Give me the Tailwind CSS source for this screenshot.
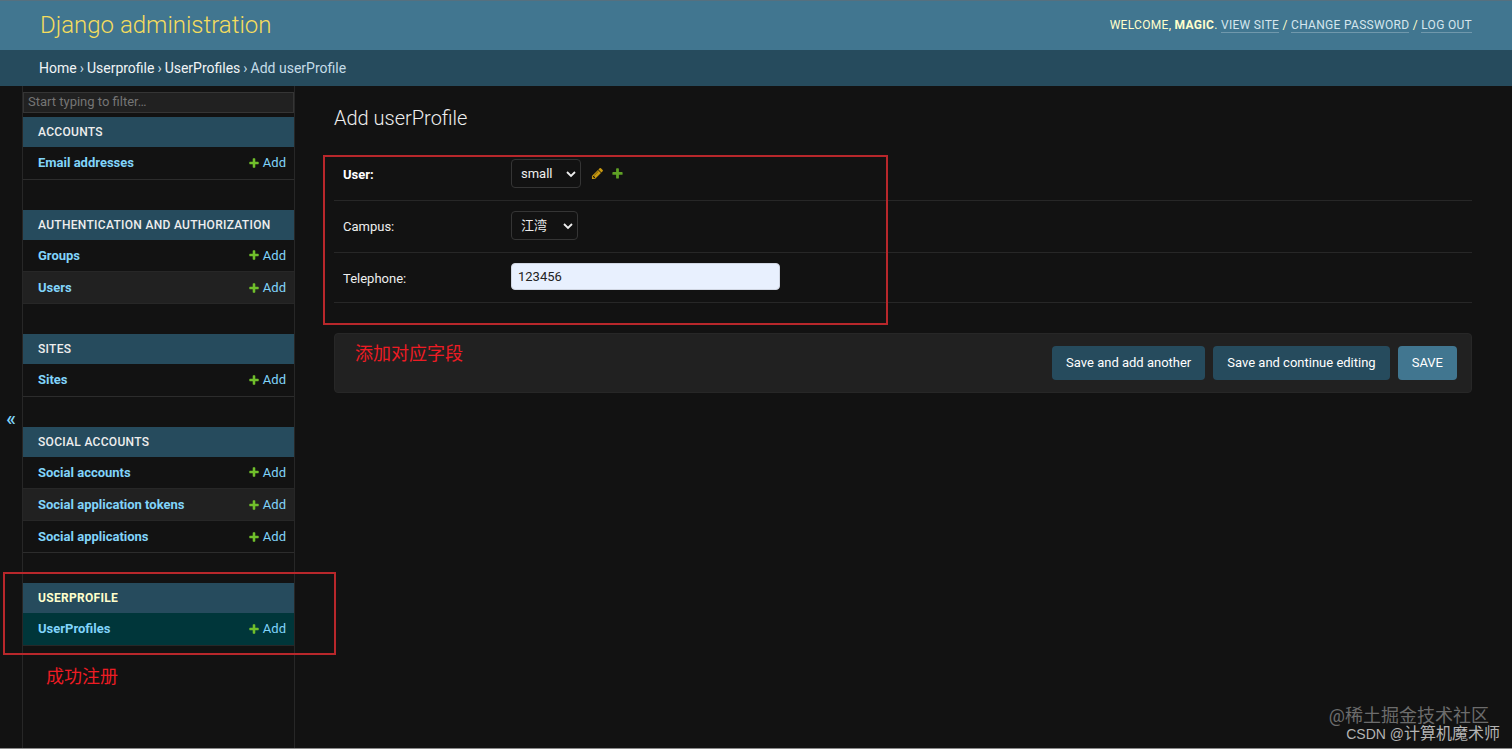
<!DOCTYPE html>
<html lang="en">
<head>
    <meta charset="UTF-8">
    <meta name="viewport" content="width=device-width, initial-scale=1.0">
    <title>Add userProfile | Django site admin</title>
    <script src="https://cdn.jsdelivr.net/npm/@tailwindcss/browser@4"></script>
</head>
<body class="relative min-h-screen flex flex-col bg-[#121212] border-b border-[#8a8a8a] font-['Roboto','Noto_Sans_CJK_SC',sans-serif] text-[13px] text-[#eeeeee]">
    <!-- Shared icons -->
    <svg class="hidden">
        <symbol id="icon-add" viewBox="0 0 1792 1792">
            <path d="M1600 796v192q0 40-28 68t-68 28h-416v416q0 40-28 68t-68 28h-192q-40 0-68-28t-28-68v-416h-416q-40 0-68-28t-28-68v-192q0-40 28-68t68-28h416v-416q0-40 28-68t68-28h192q40 0 68 28t28 68v416h416q40 0 68 28t28 68z"/>
        </symbol>
        <symbol id="icon-change" viewBox="0 0 1792 1792">
            <path d="M491 1536l91-91-235-235-91 91v107h128v128h107zm523-928q0-22-22-22-10 0-17 7l-542 542q-7 7-7 17 0 22 22 22 10 0 17-7l542-542q7-7 7-17zm-54-192l416 416-832 832h-416v-416zm683 96q0 53-37 90l-166 166-416-416 166-165q36-38 90-38 53 0 91 38l235 234q37 39 37 91z"/>
        </symbol>
        <symbol id="icon-chevron" viewBox="0 0 10 10">
            <path d="M1 3l4 4 4-4" fill="none" stroke="#eeeeee" stroke-width="1.8"/>
        </symbol>
    </svg>

    <header class="h-[50px] px-10 pb-0.5 flex items-center justify-between bg-[#417690] border-t border-[#56707f] text-[#ffffcc]">
        <a href="#" class="text-2xl font-light text-[#f5dd5d]">Django administration</a>
        <div class="text-xs tracking-wide uppercase">
            Welcome, <strong>magic</strong>.
            <a href="#" class="text-[#d5e6ee] border-b border-white/25">View site</a> /
            <a href="#" class="text-[#d5e6ee] border-b border-white/25">Change password</a> /
            <a href="#" class="text-[#d5e6ee] border-b border-white/25">Log out</a>
        </div>
    </header>

    <nav aria-label="Breadcrumbs" class="h-9 px-[39px] flex items-center gap-[3px] bg-[#264b5d] text-sm text-[#c4dce8]">
        <a href="#" class="text-[#f0f4f6]">Home</a> ›
        <a href="#" class="text-[#f0f4f6]">Userprofile</a> ›
        <a href="#" class="text-[#f0f4f6]">UserProfiles</a> ›
        <span>Add userProfile</span>
    </nav>

    <div class="flex flex-1">
        <button type="button" aria-label="Toggle navigation" class="w-[22px] pt-0.5 text-xl font-medium text-[#81d4fa]">«</button>

        <!-- Sidebar -->
        <aside class="w-[273px] shrink-0 pt-1.5 border-x border-[#272727]">
            <input type="search" aria-label="Filter navigation items" placeholder="Start typing to filter…" class="block w-full h-[21px] mb-1 px-1 pb-0.5 bg-[#212121] border border-[#353535] text-[13px] placeholder:text-[#757575]">

            <table class="w-full mb-[30px]">
                <caption class="h-[30px] px-[15px] bg-[#264b5d] text-left text-xs leading-[30px] tracking-wide font-medium uppercase"><a href="#">Accounts</a></caption>
                <tbody>
                    <tr class="h-8 border-b border-[#2c2c2c] text-[#81d4fa]">
                        <th scope="row" class="pl-[15px] text-left font-bold"><a href="#">Email addresses</a></th>
                        <td class="pr-2"><a href="#" class="flex items-center justify-end gap-[3px]"><svg class="size-3 fill-[#70bf2b]"><use href="#icon-add"/></svg>Add</a></td>
                    </tr>
                </tbody>
            </table>

            <table class="w-full mb-[30px]">
                <caption class="h-[30px] px-[15px] bg-[#264b5d] text-left text-xs leading-[30px] tracking-wide font-medium uppercase"><a href="#">Authentication and Authorization</a></caption>
                <tbody>
                    <tr class="h-8 border-b border-[#272727] text-[#81d4fa]">
                        <th scope="row" class="pl-[15px] text-left font-bold"><a href="#">Groups</a></th>
                        <td class="pr-2"><a href="#" class="flex items-center justify-end gap-[3px]"><svg class="size-3 fill-[#70bf2b]"><use href="#icon-add"/></svg>Add</a></td>
                    </tr>
                    <tr class="h-8 bg-[#212121] border-b border-[#272727] text-[#81d4fa]">
                        <th scope="row" class="pl-[15px] text-left font-bold"><a href="#">Users</a></th>
                        <td class="pr-2"><a href="#" class="flex items-center justify-end gap-[3px]"><svg class="size-3 fill-[#70bf2b]"><use href="#icon-add"/></svg>Add</a></td>
                    </tr>
                </tbody>
            </table>

            <table class="w-full mb-[30px]">
                <caption class="h-[30px] px-[15px] bg-[#264b5d] text-left text-xs leading-[30px] tracking-wide font-medium uppercase"><a href="#">Sites</a></caption>
                <tbody>
                    <tr class="h-8 border-b border-[#2c2c2c] text-[#81d4fa]">
                        <th scope="row" class="pl-[15px] text-left font-bold"><a href="#">Sites</a></th>
                        <td class="pr-2"><a href="#" class="flex items-center justify-end gap-[3px]"><svg class="size-3 fill-[#70bf2b]"><use href="#icon-add"/></svg>Add</a></td>
                    </tr>
                </tbody>
            </table>

            <table class="w-full mb-[30px]">
                <caption class="h-[30px] px-[15px] bg-[#264b5d] text-left text-xs leading-[30px] tracking-wide font-medium uppercase"><a href="#">Social Accounts</a></caption>
                <tbody>
                    <tr class="h-8 border-b border-[#272727] text-[#81d4fa]">
                        <th scope="row" class="pl-[15px] text-left font-bold"><a href="#">Social accounts</a></th>
                        <td class="pr-2"><a href="#" class="flex items-center justify-end gap-[3px]"><svg class="size-3 fill-[#70bf2b]"><use href="#icon-add"/></svg>Add</a></td>
                    </tr>
                    <tr class="h-8 bg-[#212121] border-b border-[#272727] text-[#81d4fa]">
                        <th scope="row" class="pl-[15px] text-left font-bold"><a href="#">Social application tokens</a></th>
                        <td class="pr-2"><a href="#" class="flex items-center justify-end gap-[3px]"><svg class="size-3 fill-[#70bf2b]"><use href="#icon-add"/></svg>Add</a></td>
                    </tr>
                    <tr class="h-8 border-b border-[#2c2c2c] text-[#81d4fa]">
                        <th scope="row" class="pl-[15px] text-left font-bold"><a href="#">Social applications</a></th>
                        <td class="pr-2"><a href="#" class="flex items-center justify-end gap-[3px]"><svg class="size-3 fill-[#70bf2b]"><use href="#icon-add"/></svg>Add</a></td>
                    </tr>
                </tbody>
            </table>

            <!-- Current app, marked with a red box and a note -->
            <div class="relative">
                <table class="w-full">
                    <caption class="h-[30px] px-[15px] bg-[#264b5d] text-left text-xs leading-[30px] tracking-wide font-bold text-[#ffffcc] uppercase"><a href="#">Userprofile</a></caption>
                    <tbody>
                        <tr class="h-8 bg-[#00363a] border-b border-[#272727] text-[#81d4fa]">
                            <th scope="row" class="pl-[15px] text-left font-bold"><a href="#">UserProfiles</a></th>
                            <td class="pr-2"><a href="#" class="flex items-center justify-end gap-[3px]"><svg class="size-3 fill-[#70bf2b]"><use href="#icon-add"/></svg>Add</a></td>
                        </tr>
                    </tbody>
                </table>
                <div class="absolute -top-[11px] -left-5 -right-[42px] h-[83px] border-2 border-[#b8272b] pointer-events-none"></div>
                <p class="absolute top-20 left-[23px] text-lg text-[#ed1c24]">成功注册</p>
            </div>
        </aside>

        <!-- Content -->
        <main class="flex-1 pt-[18px] pl-[39px] pr-10">
            <h1 class="mb-[17px] text-xl leading-7 font-light">Add userProfile</h1>
            <form>
                <fieldset class="relative">
                    <div class="flex items-start px-[9px] pt-2.5 pb-3 border-b border-[#272727]">
                        <label for="id_user" class="w-[168px] pt-1.5 leading-5 font-bold text-white">User:</label>
                        <div class="flex items-center">
                            <div class="grid items-center">
                                <select id="id_user" class="col-start-1 row-start-1 appearance-none w-[70px] h-[29px] px-[9px] bg-[#121212] border border-[#353535] rounded text-[13px]">
                                    <option>small</option>
                                </select>
                                <svg class="col-start-1 row-start-1 justify-self-end mr-[5px] size-2.5 pointer-events-none"><use href="#icon-chevron"/></svg>
                            </div>
                            <a href="#" aria-label="Change selected user" class="ml-2.5"><svg class="size-[13px] fill-[#c9990f]"><use href="#icon-change"/></svg></a>
                            <a href="#" aria-label="Add another user" class="ml-[7px]"><svg class="size-[13px] fill-[#5fa025]"><use href="#icon-add"/></svg></a>
                        </div>
                    </div>
                    <div class="flex items-start px-[9px] pt-2.5 pb-3 border-b border-[#272727]">
                        <label for="id_campus" class="w-[168px] pt-1.5 leading-5">Campus:</label>
                        <div class="grid items-center">
                            <select id="id_campus" class="col-start-1 row-start-1 appearance-none w-[67px] h-[29px] px-[9px] bg-[#121212] border border-[#353535] rounded text-[13px]">
                                <option>江湾</option>
                            </select>
                            <svg class="col-start-1 row-start-1 justify-self-end mr-[5px] size-2.5 pointer-events-none"><use href="#icon-chevron"/></svg>
                        </div>
                    </div>
                    <div class="flex items-start px-[9px] pt-2.5 pb-3 border-b border-[#272727]">
                        <label for="id_telephone" class="w-[168px] pt-1.5 leading-5">Telephone:</label>
                        <input type="text" id="id_telephone" value="123456" class="w-[269px] h-[27px] px-1.5 bg-[#e8f0fe] border border-[#d0d6e2] rounded text-[13px] text-[#222222]">
                    </div>
                    <div class="absolute top-1.5 -left-[11px] w-[565px] h-[170px] border-2 border-[#b8272b] pointer-events-none"></div>
                </fieldset>

                <div class="mt-[30px] px-3.5 py-3 flex items-start justify-end gap-2 bg-[#212121] border border-[#272727] rounded">
                    <p class="mr-auto pl-1.5 text-lg leading-4 text-[#ed1c24]">添加对应字段</p>
                    <button type="submit" class="h-[34px] px-3.5 bg-[#264b5d] rounded text-white">Save and add another</button>
                    <button type="submit" class="h-[34px] px-3.5 bg-[#264b5d] rounded text-white">Save and continue editing</button>
                    <button type="submit" class="h-[34px] px-3.5 bg-[#417690] rounded text-white">SAVE</button>
                </div>
            </form>
        </main>
    </div>

    <!-- Watermarks -->
    <p class="absolute right-[23px] bottom-5 text-lg leading-6 text-[#6c6c6c]">@稀土掘金技术社区</p>
    <p class="absolute right-3 bottom-0.5 text-base leading-6 text-[#b4b4b4] font-['Liberation_Sans','Noto_Sans_CJK_SC',sans-serif]"><span class="text-sm">CSDN @</span>计算机魔术师</p>
</body>
</html>
